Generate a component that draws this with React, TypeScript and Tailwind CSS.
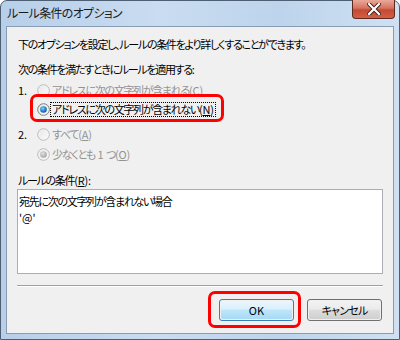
import React from "react";

const font = "font-['Noto_Sans_CJK_JP','Noto_Sans',sans-serif] [font-feature-settings:'palt']";

function Radio({ checked, disabled }: { checked?: boolean; disabled?: boolean }) {
  const id = `${checked ? "c" : "u"}${disabled ? "d" : "e"}`;
  return (
    <svg width="13" height="13" viewBox="0 0 13 13" className="shrink-0">
      <defs>
        <linearGradient id={`bg${id}`} x1="0" y1="0" x2="1" y2="1">
          <stop offset="0" stopColor={disabled ? "#e6e6e6" : "#d2d2d2"} />
          <stop offset="1" stopColor={disabled ? "#fbfbfb" : "#ffffff"} />
        </linearGradient>
        <radialGradient id={`dot${id}`} cx="0.4" cy="0.35" r="0.7">
          <stop offset="0" stopColor={disabled ? "#e0e0e0" : "#8fd0fb"} />
          <stop offset="0.5" stopColor={disabled ? "#c2c2c2" : "#2c8fd6"} />
          <stop offset="1" stopColor={disabled ? "#9e9e9e" : "#0b4f8e"} />
        </radialGradient>
      </defs>
      <circle cx="6.5" cy="6.5" r="5.8" fill={`url(#bg${id})`} stroke={disabled ? "#bcbcbc" : "#7c7e80"} strokeWidth="1" />
      <circle cx="6.5" cy="6.5" r="4.4" fill="none" stroke={disabled ? "#f4f4f4" : "#f8f8f8"} strokeWidth="0.8" />
      {checked && <circle cx="6.5" cy="6.5" r="3.3" fill={`url(#dot${id})`} />}
    </svg>
  );
}

function Key({ k }: { k: string }) {
  return (
    <span className="tracking-[-0.2px]">
      (<span className="underline">{k}</span>)
    </span>
  );
}

function Btn({ children, primary }: { children: React.ReactNode; primary?: boolean }) {
  return (
    <div
      className={
        "w-[75px] h-[22px] rounded-[3px] border p-[1px] " +
        (primary ? "border-[#3c7fb1]" : "border-[#707070]")
      }
    >
      <div
        className={
          "w-full h-full rounded-[2px] flex items-center justify-center text-[11px] tracking-[-0.8px] text-black " +
          (primary
            ? "bg-[linear-gradient(#eaf6fd_0%,#d9f0fc_45%,#bee6fd_50%,#a7d9f5_100%)]"
            : "bg-[linear-gradient(#f2f2f2_0%,#ebebeb_45%,#dddddd_50%,#cfcfcf_100%)]")
        }
      >
        {children}
      </div>
    </div>
  );
}

export default function App() {
  return (
    <div className={`relative w-[400px] h-[340px] bg-white ${font}`}>
      <div className="w-[400px] h-[340px] rounded-t-[7px] border border-[#4f5f73] bg-[linear-gradient(90deg,#b7cfe9_0%,#c9dcf1_40%,#bdd4ec_70%,#cfe0f2_100%)] flex flex-col px-[5px] pb-[5px]">
        <div className="h-[25px] flex items-start">
          <span className="mt-[3px] ml-[1px] text-[12px] tracking-[-0.7px] leading-[18px] text-[#1b1b1b]">ルール条件のオプション</span>
          <div className="ml-auto -mt-[1px] -mr-[1px] w-[43px] h-[19px] rounded-b-[4px] border border-[#5c2a22] border-t-0 bg-[linear-gradient(#e9a99a_0%,#d6735f_45%,#c44a34_55%,#d35f44_100%)] flex items-center justify-center">
            <svg width="14" height="12" viewBox="0 0 14 12">
              <path d="M2 1 L12 11 M12 1 L2 11" stroke="#3b1a15" strokeWidth="4" strokeLinecap="square" />
              <path d="M2 1 L12 11 M12 1 L2 11" stroke="#ffffff" strokeWidth="2.2" strokeLinecap="square" />
            </svg>
          </div>
        </div>
        <div className="flex-1 border border-[#8a9cb3] bg-[#f0f0f0] px-[10px] pt-[9px] flex flex-col text-[11px] tracking-[-1.3px] leading-[16px] text-black">
          <div className="ml-[1px]">下のオプションを設定し、ルールの条件をより詳しくすることができます。</div>
          <div className="ml-[1px] mt-[9px]">
            次の条件を満たすときにルールを適用する<span className="tracking-normal">:</span>
          </div>
          <div className="mt-[5px] flex items-center h-[16px]">
            <span className="w-[20px] pl-[1px] tracking-normal">1.</span>
            <Radio disabled />
            <span className="ml-[2px] text-[#939393]">
              アドレスに次の文字列が含まれる<Key k="C" />
            </span>
          </div>
          <div className="mt-[3px] flex items-center h-[16px]">
            <span className="w-[20px]" />
            <Radio checked />
            <span className="border border-dotted border-black px-[1px] leading-[13px]">
              アドレスに次の文字列が含まれない<Key k="N" />
            </span>
          </div>
          <div className="mt-[9px] flex items-center h-[16px]">
            <span className="w-[20px] pl-[1px] tracking-normal">2.</span>
            <Radio disabled />
            <span className="ml-[2px] text-[#939393]">
              すべて<Key k="A" />
            </span>
          </div>
          <div className="mt-[4px] flex items-center h-[16px]">
            <span className="w-[20px]" />
            <Radio checked disabled />
            <span className="ml-[2px] text-[#939393]">
              少なくとも<span className="tracking-normal"> 1 </span>つ<Key k="O" />
            </span>
          </div>
          <div className="mt-[10px] ml-[1px]">
            ルールの条件<Key k="R" />
            <span className="tracking-normal">:</span>
          </div>
          <div className="mt-[1px] h-[85px] border border-[#abadb3] bg-white pl-[1px] pt-[3px] leading-[16px]">
            <div>宛先に次の文字列が含まれない場合</div>
            <div className="tracking-normal">'@'</div>
          </div>
          <div className="mt-[11px] h-[2px] border-t border-[#a0a0a0] border-b border-b-white" />
          <div className="mt-[12px] flex justify-end gap-[13px] pr-[1px]">
            <Btn primary>
              <span className="tracking-normal">OK</span>
            </Btn>
            <Btn>キャンセル</Btn>
          </div>
        </div>
      </div>
      <div className="absolute left-[30px] top-[94px] w-[194px] h-[28px] rounded-[7px] border-[3px] border-[#ff0000]" />
      <div className="absolute left-[208px] top-[291px] w-[93px] h-[37px] rounded-[7px] border-[3px] border-[#ff0000]" />
    </div>
  );
}
